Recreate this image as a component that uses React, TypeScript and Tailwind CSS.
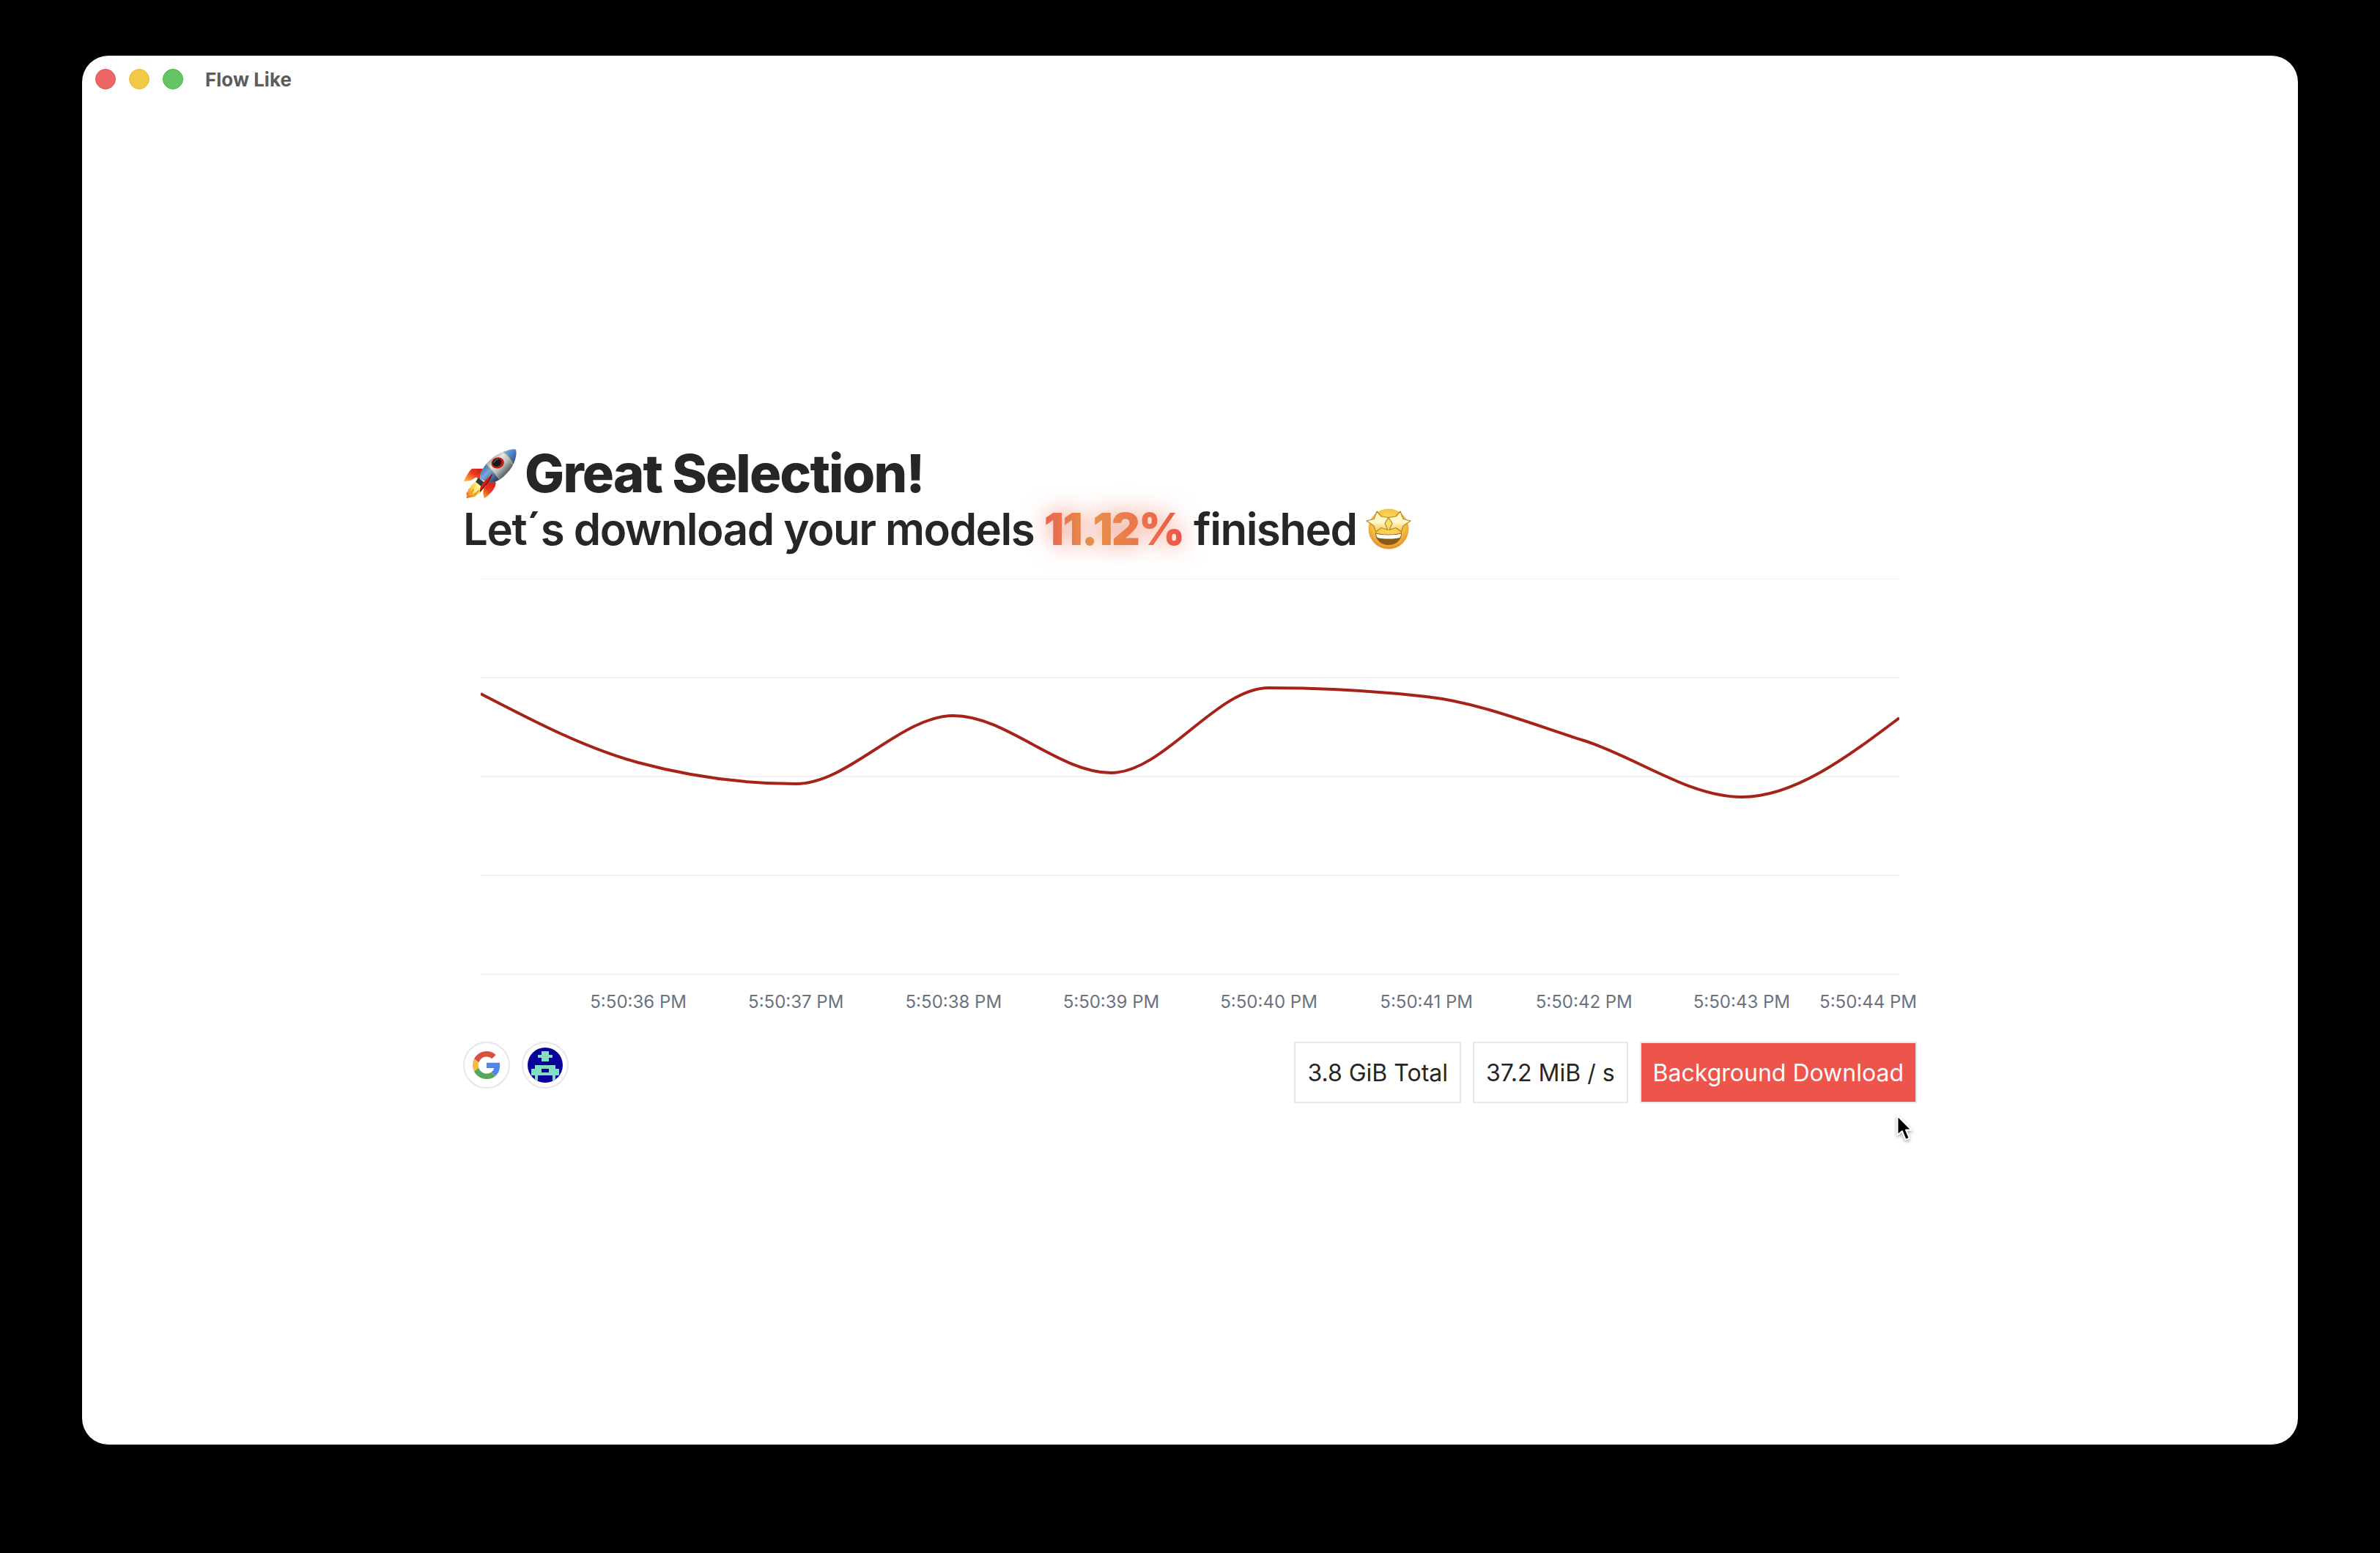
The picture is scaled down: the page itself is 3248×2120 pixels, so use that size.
const ticks = [
  "5:50:36 PM",
  "5:50:37 PM",
  "5:50:38 PM",
  "5:50:39 PM",
  "5:50:40 PM",
  "5:50:41 PM",
  "5:50:42 PM",
  "5:50:43 PM",
];
const lastTick = "5:50:44 PM";

const CHART_W = 1936;
const CHART_H = 541;
const values = [157, 251, 280, 187, 265, 149, 161, 221, 298, 190];

/* Monotone cubic interpolation through evenly spaced points. */
function monotonePath(ys: number[], width: number) {
  const h = width / (ys.length - 1);
  const slopes = ys.slice(1).map((y, i) => (y - ys[i]) / h);
  const t = ys.map((_, i) => {
    if (i === 0 || i === ys.length - 1) return 0;
    const a = slopes[i - 1];
    const b = slopes[i];
    const p = (a + b) / 2;
    return (Math.sign(a) + Math.sign(b)) * Math.min(Math.abs(a), Math.abs(b), 0.5 * Math.abs(p)) || 0;
  });
  t[0] = (3 * slopes[0] - t[1]) / 2;
  const n = ys.length - 1;
  t[n] = (3 * slopes[n - 1] - t[n - 1]) / 2;
  let d = `M0,${ys[0]}`;
  for (let i = 0; i < n; i++) {
    const x0 = i * h;
    const x1 = x0 + h;
    d += `C${x0 + h / 3},${ys[i] + (t[i] * h) / 3},${x1 - h / 3},${ys[i + 1] - (t[i + 1] * h) / 3},${x1},${ys[i + 1]}`;
  }
  return d;
}

function Rocket() {
  return (
    <svg viewBox="0 0 84 92" preserveAspectRatio="none" role="img" aria-label="Rocket" className="inline-block size-[72px] shrink-0 overflow-visible">
      <defs>
        <linearGradient id="hull" x1="34" y1="28" x2="62" y2="52" gradientUnits="userSpaceOnUse">
          <stop offset="0" stopColor="#8f989c" />
          <stop offset="0.35" stopColor="#e3e5e3" />
          <stop offset="0.65" stopColor="#bfc3c2" />
          <stop offset="1" stopColor="#5f686c" />
        </linearGradient>
        <linearGradient id="blue" x1="28" y1="38" x2="52" y2="60" gradientUnits="userSpaceOnUse">
          <stop offset="0" stopColor="#3f6fb0" />
          <stop offset="0.4" stopColor="#7ba7dc" />
          <stop offset="1" stopColor="#25406f" />
        </linearGradient>
        <linearGradient id="nose" x1="62" y1="12" x2="84" y2="28" gradientUnits="userSpaceOnUse">
          <stop offset="0" stopColor="#7fb0e6" />
          <stop offset="0.5" stopColor="#4d80c4" />
          <stop offset="1" stopColor="#264a82" />
        </linearGradient>
        <linearGradient id="finL" x1="28" y1="32" x2="8" y2="60" gradientUnits="userSpaceOnUse">
          <stop offset="0" stopColor="#b8160c" />
          <stop offset="0.55" stopColor="#ec3d20" />
          <stop offset="1" stopColor="#fbb040" />
        </linearGradient>
        <linearGradient id="finR" x1="52" y1="54" x2="32" y2="88" gradientUnits="userSpaceOnUse">
          <stop offset="0" stopColor="#c81d10" />
          <stop offset="0.6" stopColor="#e8361e" />
          <stop offset="1" stopColor="#f9a13a" />
        </linearGradient>
        <linearGradient id="fire" x1="28" y1="60" x2="6" y2="84" gradientUnits="userSpaceOnUse">
          <stop offset="0" stopColor="#fff38a" />
          <stop offset="0.55" stopColor="#fbd33c" />
          <stop offset="1" stopColor="#f07a1c" />
        </linearGradient>
      </defs>
      <path d="M34 38 L14 38 C9 43 5 51 1 60 L11 59 L21 53 L27 58 Z" fill="url(#finL)" />
      <path d="M45 55 C50 56 52 60 52 64 C51 73 44 82 34 90 C32 84 31 79 33 74 L31 66 Z" fill="url(#finR)" />
      <path d="M20 60 L13 67 C12 70 11 71 8 74 C9 77 5 79 5 82 L6 85 L5 90 L12 88 L19 87 L24 82 L28 80 L36 68 Z" fill="url(#fire)" />
      <path d="M22 63 C18 69 18 77 10 84 C20 80 26 75 31 69 Z" fill="#fff6a8" opacity="0.75" />
      <path d="M17 74 L13 82 M25 76 L19 83" stroke="#e8791c" strokeWidth="1.5" />
      <path d="M24 54 L35 63 L30 70 L20 61 Z" fill="#2f3940" />
      <path d="M63 9 C73 4 82 3 84 5 C86 15 82 30 74 41 C65 53 54 63 44 62 L27 57 C25 45 38 20 63 9 Z" fill="url(#hull)" />
      <path d="M37 30 C30 39 26 49 27 57 L44 62 C49 62 53 60 58 56 Z" fill="url(#blue)" />
      <path d="M64 9 C72 5 82 3 84 5 C86 13 83 22 79 31 C76 22 71 14 64 9 Z" fill="url(#nose)" />
      <path d="M37 30 L58 56 M64 9 C71 14 76 22 79 31" stroke="#c9b26a" strokeWidth="1.2" fill="none" />
      <path d="M46 48 C43 57 37 66 27 78 C26 70 30 62 46 48 Z" fill="#d3210f" />
      <path d="M46 48 C43 57 37 66 27 78" stroke="#5b0c06" strokeWidth="1.5" fill="none" />
      <ellipse cx="55" cy="28" rx="10.5" ry="9.5" transform="rotate(-35 55 28)" fill="#c02018" />
      <ellipse cx="54" cy="27.5" rx="7.5" ry="6.5" transform="rotate(-35 54 27.5)" fill="#14181c" />
      <path d="M49 28 C50 24 53 22 56 22" stroke="#5e666c" strokeWidth="1.5" fill="none" />
    </svg>
  );
}

function StarFace() {
  const star = "M14 6 L20 13 L30 14.500 L25 22 L29 31.500 L20 28.500 L12.500 34 L10 26 L0 19 L10 16.500 Z";
  return (
    <svg viewBox="0 0 60 60" role="img" aria-label="Star-struck" className="-mt-3 inline-block size-[60px] shrink-0 overflow-visible">
      <defs>
        <radialGradient id="face" cx="0.5" cy="0.38" r="0.64">
          <stop offset="0" stopColor="#fbe66a" />
          <stop offset="0.6" stopColor="#f6c443" />
          <stop offset="0.85" stopColor="#eca236" />
          <stop offset="1" stopColor="#d98424" />
        </radialGradient>
        <linearGradient id="star" x1="0" y1="0" x2="0" y2="1">
          <stop offset="0" stopColor="#fff6b0" />
          <stop offset="0.5" stopColor="#fffbd2" />
          <stop offset="1" stopColor="#f3c63e" />
        </linearGradient>
      </defs>
      <circle cx="30" cy="30" r="27.5" fill="url(#face)" />
      <path d="M12 35 C18 38.500 42 38.500 48 35 C48 45 40.500 52 30 52 C19.500 52 12 45 12 35 Z" fill="#8a5a16" />
      <path d="M13 36.500 C20 39 40 39 47 36.500 C47 39.500 46 41.500 45 42 C36 44 24 44 15 42 C14 41 13 39 13 36.500 Z" fill="#fff" />
      <path d={star} fill="url(#star)" stroke="#b9832a" strokeWidth="1.2" strokeLinejoin="round" />
      <path d={star} transform="translate(60 0) scale(-1 1)" fill="url(#star)" stroke="#b9832a" strokeWidth="1.2" strokeLinejoin="round" />
    </svg>
  );
}

function GoogleMark() {
  return (
    <svg viewBox="0 0 48 48" role="img" aria-label="Google" className="size-[38px]">
      <path fill="#d8503f" d="M24 9.5c3.54 0 6.71 1.22 9.21 3.6l6.85-6.85C35.9 2.38 30.47 0 24 0 14.62 0 6.51 5.38 2.56 13.22l7.98 6.19C12.43 13.72 17.74 9.5 24 9.5z" />
      <path fill="#5384ee" d="M46.98 24.55c0-1.57-.15-3.09-.38-4.55H24v9.02h12.94c-.58 2.96-2.26 5.48-4.78 7.18l7.73 6c4.51-4.18 7.09-10.36 7.09-17.65z" />
      <path fill="#f3bd42" d="M10.53 28.59c-.48-1.45-.76-2.99-.76-4.59s.27-3.14.76-4.59l-7.98-6.19C.92 16.46 0 20.12 0 24s.92 7.54 2.56 10.78l7.97-6.19z" />
      <path fill="#58a55c" d="M24 48c6.48 0 11.93-2.13 15.89-5.81l-7.73-6c-2.15 1.45-4.92 2.3-8.16 2.3-6.26 0-11.57-4.22-13.47-9.91l-7.98 6.19C6.51 42.62 14.62 48 24 48z" />
    </svg>
  );
}

function PixelAvatar() {
  return (
    <svg viewBox="0 0 10 10" role="img" aria-label="Model author" shapeRendering="crispEdges" className="size-12 rounded-full bg-[#07009a]">
      <path
        fill="#80dfc0"
        d="M4 1h2v1h1v1H6v1H4V3H3V2h1zM2 5h6v1h1v2H8v1h1v1H7V8H3v2H1V9h1V8H1V6h1zM4 6v1h2V6z"
        fillRule="evenodd"
      />
    </svg>
  );
}

export default function App() {
  return (
    <div className="flex min-h-screen flex-col bg-black px-28 pt-[76px] pb-[148px] font-['Inter',sans-serif] text-[#262626]">
      <div className="flex flex-1 flex-col rounded-[36px] bg-white">
        <header className="flex h-16 items-center gap-[30px] px-[18px]">
          <div className="flex gap-[18px]">
            <button aria-label="Close" className="size-7 rounded-full border border-[#e4504c] bg-[#ec6765]" />
            <button aria-label="Minimize" className="size-7 rounded-full border border-[#efbd2e] bg-[#f2c944]" />
            <button aria-label="Zoom" className="size-7 rounded-full border border-[#3fb845] bg-[#65c466]" />
          </div>
          <span className="pt-0.5 text-[26px] leading-8 font-bold text-[#5c5c5c]">Flow Like</span>
        </header>

        <main className="flex flex-1 flex-col items-center justify-center">
          <section className="w-full max-w-[1984px]">
            <h1 className="flex items-center gap-3 text-[72px] leading-[80px] font-extrabold tracking-tight">
              <Rocket />
              Great Selection!
            </h1>
            <h2 className="text-[60px] leading-[72px] font-semibold tracking-tight">
              Let´s download your models{" "}
              <span className="bg-linear-to-r from-[#eb644e] via-[#e6914a] via-35% to-[#ec5549] bg-clip-text font-black text-transparent drop-shadow-[0_0_16px_rgba(235,94,60,0.7)]">
                11.12%
              </span>{" "}
              finished <StarFace />
            </h2>

            <div className="mt-8 px-6">
              <svg
                viewBox={`0 0 ${CHART_W} ${CHART_H}`}
                preserveAspectRatio="none"
                role="img"
                aria-label="Download speed over time"
                className="block h-[541px] w-full"
              >
                {[0, 135, 270, 405, 540].map((y) => (
                  <line key={y} x1="0" x2={CHART_W} y1={y} y2={y} stroke="#f3f3f3" strokeWidth="2" />
                ))}
                <path d={monotonePath(values, CHART_W)} fill="none" stroke="#a52319" strokeWidth="4" />
              </svg>
              <div className="mt-[21px] grid grid-cols-[repeat(18,minmax(0,1fr))] text-[24px] leading-8 whitespace-nowrap text-[#6b7280]">
                <span />
                {ticks.map((t) => (
                  <span key={t} className="col-span-2 text-center">
                    {t}
                  </span>
                ))}
                <span className="-mr-6 flex justify-end">{lastTick}</span>
              </div>
            </div>

            <div className="mt-[38px] flex items-start justify-between">
              <div className="flex gap-4">
                <div className="flex size-16 items-center justify-center rounded-full border-2 border-[#e5e7eb]">
                  <GoogleMark />
                </div>
                <div className="flex size-16 items-center justify-center rounded-full border-2 border-[#e5e7eb]">
                  <PixelAvatar />
                </div>
              </div>
              <div className="relative flex gap-4 text-[32px] leading-[48px]">
                <div className="border-2 border-[#e5e7eb] px-4 pt-[17px] pb-[15px]">3.8 GiB Total</div>
                <div className="border-2 border-[#e5e7eb] px-4 pt-[17px] pb-[15px]">37.2 MiB / s</div>
                <button className="border-2 border-[#e5e7eb] bg-[#ed544c] px-4 pt-[17px] pb-[15px] text-[#fafafa]">
                  Background Download
                </button>
                <svg
                  viewBox="0 0 22 34"
                  aria-hidden="true"
                  className="absolute top-full right-1 mt-4 h-[36px] w-[24px] overflow-visible drop-shadow-[0_2px_2px_rgba(0,0,0,0.35)]"
                >
                  <path
                    d="M1 1 L1 26 L7 21 L11.500 32 L16.500 30 L12 19.500 L19.500 19.500 Z"
                    fill="#000"
                    stroke="#fff"
                    strokeWidth="2"
                    strokeLinejoin="round"
                  />
                </svg>
              </div>
            </div>
          </section>
        </main>
      </div>
    </div>
  );
}
